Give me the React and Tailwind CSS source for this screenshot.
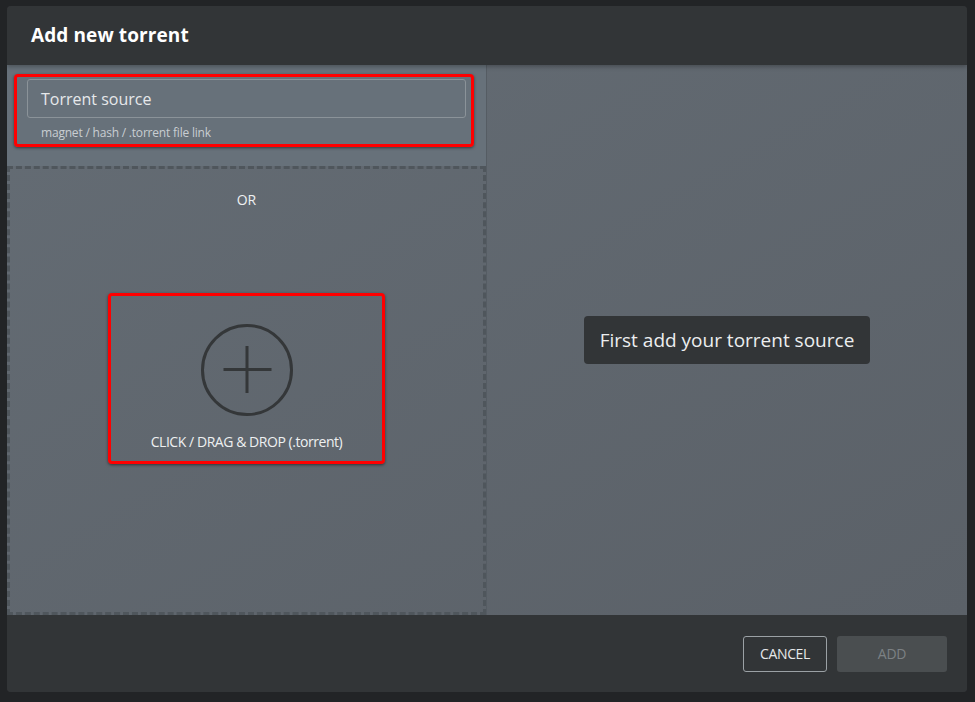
import React from "react";

const PlusCircle = () => (
  <svg width="96" height="96" viewBox="0 0 96 96" fill="none">
    <circle cx="48" cy="48" r="44.5" stroke="#343739" strokeWidth="3" />
    <path d="M48 24v47M24.5 47.5h48" stroke="#343739" strokeWidth="3" />
  </svg>
);

export default function App() {
  return (
    <div
      className="w-[975px] h-[702px] bg-[#222426] pt-[6px] pl-[7px]"
      style={{ fontFamily: '"Open Sans", "Noto Sans", sans-serif' }}
    >
      <div className="w-[960px] h-[686px] rounded-[4px] overflow-hidden flex flex-col bg-[#323537]">
        {/* header */}
        <div className="h-[59px] shrink-0 flex items-center pl-[24px] bg-[#323537] shadow-[0_2px_4px_rgba(0,0,0,0.25)] relative z-10">
          <h1 className="text-[19px] font-bold text-white tracking-[0.1px]">Add new torrent</h1>
        </div>

        {/* body */}
        <div className="h-[550px] shrink-0 flex bg-gradient-to-br from-[#646c74] to-[#5b6168]">
          {/* left column */}
          <div className="w-[480px] shrink-0 flex flex-col border-r border-[#555c63]">
            <div className="h-[101px] shrink-0 bg-[#67717a] pt-[9px] pl-[7px] pr-[12px]">
              <div className="h-[73px] rounded-[4px] border-[3px] border-[#ff0000] shadow-[0_1px_3px_rgba(0,0,0,0.5)] pl-[10px] pr-[5px] pt-[2px]">
                <div className="h-[39px] rounded-[3px] border border-[#8b9399] flex items-center pl-[13px] text-[16px] text-[#e6e8ea]">
                  Torrent source
                </div>
                <div className="pl-[14px] pt-[8px] text-[12px] leading-[14px] tracking-[-0.2px] text-[#c9ced2]">
                  magnet / hash / .torrent file link
                </div>
              </div>
            </div>
            <div className="flex-1 border-[3px] border-dashed border-[#4f565c] flex flex-col items-center">
              <div className="mt-[20px] text-[14px] font-medium text-[#eef0f1]">OR</div>
              <div className="mt-[83px] w-[277px] h-[171px] rounded-[4px] border-[3px] border-[#ff0000] shadow-[0_1px_3px_rgba(0,0,0,0.5)] flex flex-col items-center">
                <div className="mt-[26px]">
                  <PlusCircle />
                </div>
                <div className="mt-[13px] text-[14px] font-medium tracking-[-0.45px] text-[#eef0f1]">
                  CLICK / DRAG &amp; DROP (.torrent)
                </div>
              </div>
            </div>
          </div>

          {/* right column */}
          <div className="flex-1 flex items-center justify-center">
            <div className="w-[286px] h-[48px] rounded-[4px] bg-[#323537] flex items-center justify-center text-[19px] text-[#eceeef]">
              First add your torrent source
            </div>
          </div>
        </div>

        {/* footer */}
        <div className="flex-1 flex items-center justify-end gap-[10px] pr-[20px] bg-[#323537]">
          <button className="w-[84px] h-[36px] rounded-[3px] border border-[#9ba1a5] text-[14px] font-medium tracking-[-0.35px] text-[#e6e8ea]">
            CANCEL
          </button>
          <button className="w-[110px] h-[36px] rounded-[3px] bg-[#4a4e50] text-[14px] font-medium tracking-[-0.3px] text-[#7c8184]">
            ADD
          </button>
        </div>
      </div>
    </div>
  );
}
